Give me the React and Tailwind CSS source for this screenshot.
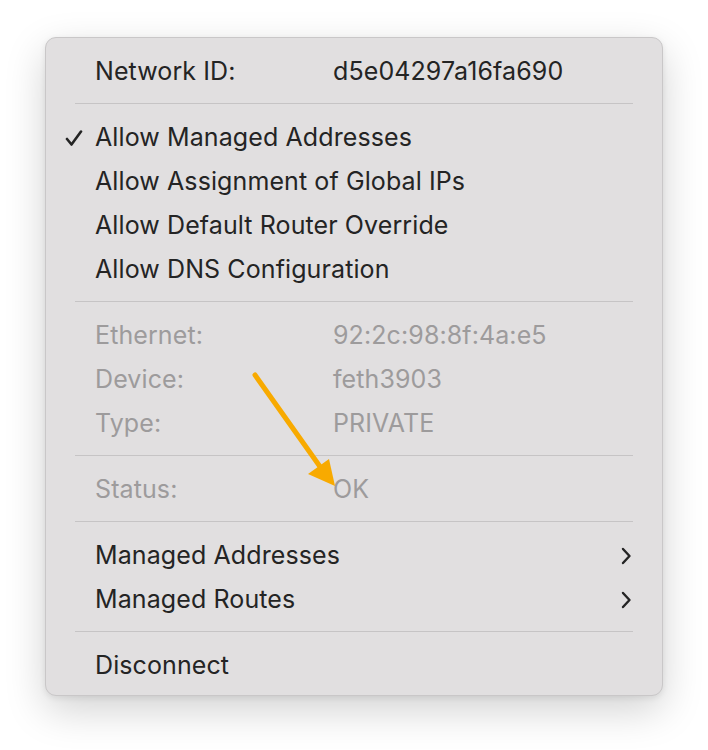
import React from 'react';

const Separator = () => <div className="mx-[29px] mt-[9px] mb-[12px] h-px bg-[#c6c4c5]" />;

const Row = ({ label, value, check, chevron, muted }) => (
  <div className={`relative flex h-[44px] items-center pl-[49px] pr-[30px] ${muted ? 'text-[#9d9b9c]' : 'text-[#242424]'}`}>
    {check && (
      <svg className="absolute left-[19px] top-[14px]" width="18" height="17" viewBox="0 0 18 17">
        <path d="M2 9 L6.5 14.5 L16 1.5" fill="none" stroke="#242424" strokeWidth="2.6" strokeLinecap="round" strokeLinejoin="round" />
      </svg>
    )}
    <span className="w-[238px] shrink-0 whitespace-nowrap">{label}</span>
    {value && <span className="whitespace-nowrap">{value}</span>}
    {chevron && (
      <svg className="ml-auto" width="12" height="18" viewBox="0 0 12 18">
        <path d="M3 2 L9.5 9 L3 16" fill="none" stroke="#242424" strokeWidth="2.4" strokeLinecap="round" strokeLinejoin="round" />
      </svg>
    )}
  </div>
);

export default function App() {
  return (
    <div className="min-h-[750px] w-[708px] bg-white pt-[37px] pl-[45px] font-['Inter',sans-serif] text-[25px] tracking-[0.1px]">
      <div className="relative w-[618px] rounded-[11px] border border-[#c9c7c8] bg-[#e1dfe0] pt-[12px] pb-[7px] shadow-[0_14px_40px_rgba(0,0,0,0.18),0_2px_6px_rgba(0,0,0,0.08)]">
        <Row label="Network ID:" value="d5e04297a16fa690" />
        <Separator />
        <Row label="Allow Managed Addresses" check />
        <Row label="Allow Assignment of Global IPs" />
        <Row label="Allow Default Router Override" />
        <Row label="Allow DNS Configuration" />
        <Separator />
        <Row label="Ethernet:" value="92:2c:98:8f:4a:e5" muted />
        <Row label="Device:" value="feth3903" muted />
        <Row label="Type:" value="PRIVATE" muted />
        <Separator />
        <Row label="Status:" value="OK" muted />
        <Separator />
        <Row label="Managed Addresses" chevron />
        <Row label="Managed Routes" chevron />
        <Separator />
        <Row label="Disconnect" />

        <svg className="pointer-events-none absolute left-[-45px] top-[-37px]" width="708" height="750" viewBox="0 0 708 750">
          <line x1="254" y1="374" x2="320" y2="467" stroke="#f8aa00" strokeWidth="5" strokeLinecap="round" />
          <polygon points="307,473 328,458 334,485" fill="#f8aa00" />
        </svg>
      </div>
    </div>
  );
}
